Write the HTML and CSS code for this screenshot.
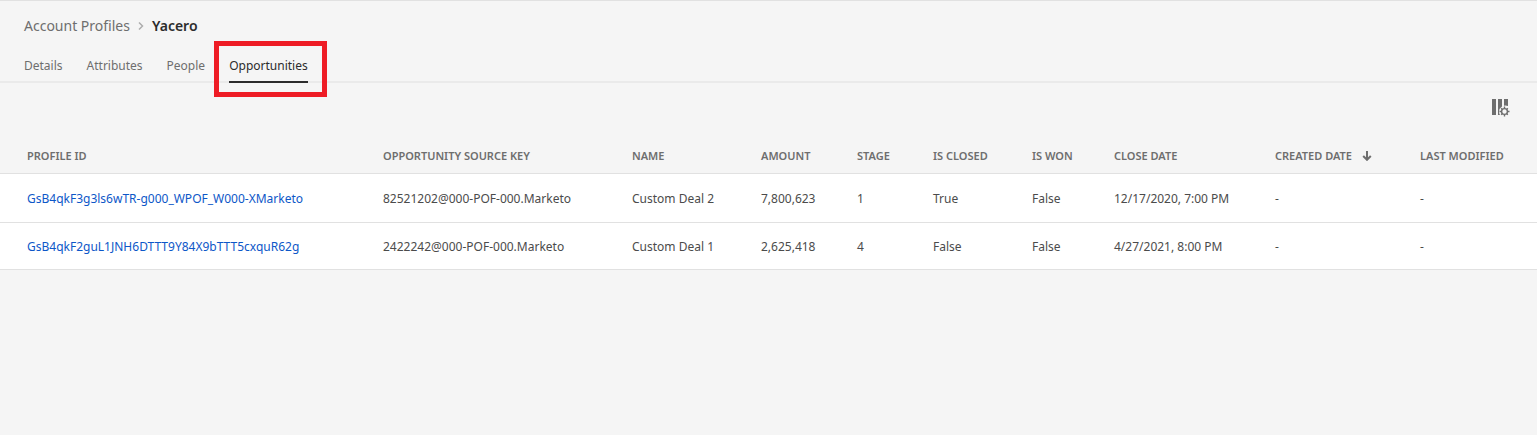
FILE: index.html
```html
<!DOCTYPE html>
<html lang="en">
<head>
<meta charset="utf-8">
<title>Yacero - Account Profiles</title>
<link rel="stylesheet" href="styles.css">
</head>
<body>
<header class="page-header">
  <nav class="breadcrumb" aria-label="Breadcrumb">
    <a class="breadcrumb-link" href="#">Account Profiles</a>
    <svg class="breadcrumb-arrow" viewBox="0 0 6 10" aria-hidden="true"><path d="M1 1.5 4.5 5 1 8.5"/></svg>
    <span class="breadcrumb-current">Yacero</span>
  </nav>
  <nav class="tabs" aria-label="Profile sections">
    <a class="tab" href="#">Details</a>
    <a class="tab" href="#">Attributes</a>
    <a class="tab" href="#">People</a>
    <a class="tab tab-active" href="#" aria-current="page">Opportunities</a>
  </nav>
</header>
<main>
  <div class="toolbar">
    <button class="column-button" type="button" aria-label="Configure columns">
      <svg class="column-icon" viewBox="0 0 18 18" aria-hidden="true">
        <path class="icon-fill" d="M0 0h4v16H0zM6 0h4v7.500Q7 9.500 7 12.500q0 2 1 3.500H6zM12 0h4v7Q14 6.200 12 6.700z"/>
        <circle class="icon-ring" cx="12.500" cy="12.500" r="2.900"/>
        <path class="icon-teeth" d="M12.500 7.500v2M12.500 15.500v2M7.500 12.500h2M15.500 12.500h2M9.200 9.200l1.200 1.200M14.600 14.600l1.200 1.200M15.800 9.200l-1.200 1.200M10.400 14.600l-1.200 1.200"/>
      </svg>
    </button>
  </div>
  <table class="grid">
    <colgroup>
      <col class="col-id"><col class="col-key"><col class="col-name"><col class="col-amount"><col class="col-stage"><col class="col-closed"><col class="col-won"><col class="col-date"><col class="col-created"><col class="col-modified">
    </colgroup>
    <thead>
      <tr>
        <th scope="col">PROFILE ID</th>
        <th scope="col">OPPORTUNITY SOURCE KEY</th>
        <th scope="col">NAME</th>
        <th scope="col">AMOUNT</th>
        <th scope="col">STAGE</th>
        <th scope="col">IS CLOSED</th>
        <th scope="col">IS WON</th>
        <th scope="col">CLOSE DATE</th>
        <th scope="col" aria-sort="descending"><button class="sort-button" type="button">CREATED DATE<svg class="sort-icon" viewBox="0 0 10 10" aria-hidden="true"><path d="M5 0v8.500M1.200 5 5 8.800 8.800 5"/></svg></button></th>
        <th scope="col">LAST MODIFIED</th>
      </tr>
    </thead>
    <tbody>
      <tr>
        <td><a class="profile-link" href="#">GsB4qkF3g3ls6wTR-g000_WPOF_W000-XMarketo</a></td>
        <td>82521202@000-POF-000.Marketo</td>
        <td>Custom Deal 2</td>
        <td>7,800,623</td>
        <td>1</td>
        <td>True</td>
        <td>False</td>
        <td>12/17/2020, 7:00 PM</td>
        <td>-</td>
        <td>-</td>
      </tr>
      <tr>
        <td><a class="profile-link" href="#">GsB4qkF2guL1JNH6DTTT9Y84X9bTTT5cxquR62g</a></td>
        <td>2422242@000-POF-000.Marketo</td>
        <td>Custom Deal 1</td>
        <td>2,625,418</td>
        <td>4</td>
        <td>False</td>
        <td>False</td>
        <td>4/27/2021, 8:00 PM</td>
        <td>-</td>
        <td>-</td>
      </tr>
    </tbody>
  </table>
</main>
</body>
</html>
```
FILE: styles.css
```css
* { box-sizing: border-box; }

body {
  margin: 0;
  background: #f5f5f5;
  color: #4b4b4b;
  font-family: "Noto Sans", "Open Sans", sans-serif;
  font-size: 12px;
  line-height: 20px;
}

a { color: inherit; text-decoration: none; }

button {
  padding: 0;
  border: 0;
  background: none;
  color: inherit;
  font: inherit;
  cursor: pointer;
}

.page-header {
  padding-top: 15px;
  border-top: 1px solid #e1e1e1;
}

.breadcrumb {
  display: flex;
  align-items: center;
  gap: 8px;
  padding: 0 24px;
  font-size: 14px;
  color: #6e6e6e;
}

.breadcrumb-arrow {
  width: 6px;
  height: 10px;
  fill: none;
  stroke: #adadad;
  stroke-width: 1.5;
}

.breadcrumb-current { color: #2c2c2c; font-weight: 600; }

.tabs {
  display: flex;
  gap: 24px;
  margin-top: 20px;
  padding: 0 24px;
  box-shadow: inset 0 -2px #eaeaea;
  color: #6e6e6e;
}

.tab {
  position: relative;
  padding-bottom: 5px;
  border-bottom: 2px solid transparent;
}

.tab-active { border-color: #2c2c2c; color: #2c2c2c; }

.tab-active::after {
  content: "";
  position: absolute;
  top: -15px;
  right: -19px;
  bottom: -16px;
  left: -15px;
  border: 5px solid #ee1c25;
}

.toolbar {
  display: flex;
  justify-content: flex-end;
  padding: 16px 27px 23px;
}

.column-button { display: flex; }
.column-icon { width: 18px; height: 18px; }
.icon-fill { fill: #6e6e6e; }
.icon-ring { fill: none; stroke: #6e6e6e; stroke-width: 1.4; }
.icon-teeth { stroke: #6e6e6e; stroke-width: 1.4; }

.grid {
  width: 100%;
  table-layout: fixed;
  border-collapse: separate;
  border-spacing: 0;
  text-align: left;
  white-space: nowrap;
}

.col-id { width: 383px; }
.col-key { width: 249px; }
.col-name { width: 129px; }
.col-amount { width: 96px; }
.col-stage { width: 76px; }
.col-closed { width: 99px; }
.col-won { width: 82px; }
.col-date { width: 161px; }
.col-created { width: 145px; }
.col-modified { width: 117px; }

.grid th,
.grid td {
  padding: 0;
  border-bottom: 1px solid #e1e1e1;
}

.grid th:first-child,
.grid td:first-child { padding-left: 27px; }

.grid th {
  height: 34px;
  padding-bottom: 2px;
  font-size: 11px;
  font-weight: 600;
  line-height: 16px;
  color: #6e6e6e;
}

.grid td { height: 47px; padding-top: 2px; background: #fff; }
.grid tbody tr:first-child td { height: 49px; }

.sort-button { display: flex; align-items: center; gap: 10px; }

.sort-icon {
  width: 10px;
  height: 10px;
  fill: none;
  stroke: #6e6e6e;
  stroke-width: 2;
}

.profile-link { color: #0d57c8; }
```
